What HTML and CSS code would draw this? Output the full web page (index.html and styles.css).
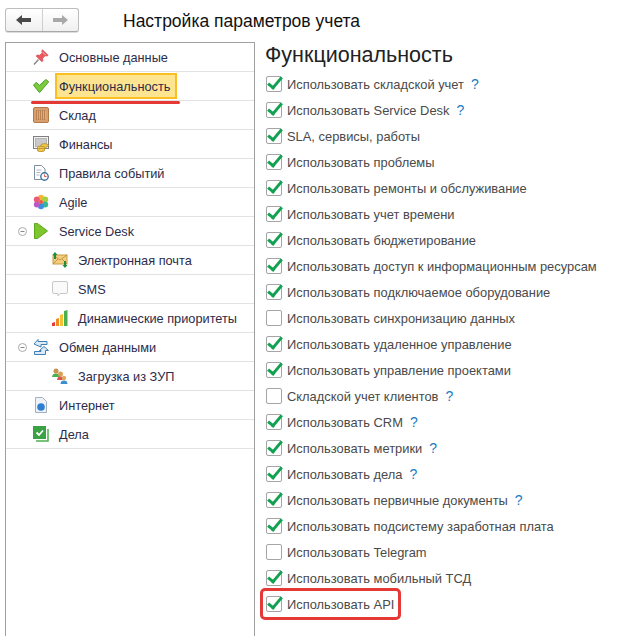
FILE: index.html
```html
<!DOCTYPE html>
<html lang="ru">
<head>
<meta charset="utf-8">
<title>Настройка параметров учета</title>
<link rel="stylesheet" href="styles.css">
</head>
<body>
<header class="top">
  <div class="navbtns">
    <button class="navbtn back"><svg width="16" height="12" viewBox="0 0 16 12"><path d="M0 6 6 1v3h9v4H6v3z" fill="#4a4a4a"/></svg></button>
    <button class="navbtn fwd"><svg width="16" height="12" viewBox="0 0 16 12"><path d="M16 6 10 1v3H1v4h9v3z" fill="#a8a8a8"/></svg></button>
  </div>
  <h1 class="title">Настройка параметров учета</h1>
</header>
<main class="main">
  <nav class="side">
    <div class="row"><span class="tree"></span><svg class="ico" width="16" height="16" viewBox="0 0 16 16"><path d="M5.500 10.500 1 15.500" stroke="#8a8a8a" stroke-width="1.500"/><path d="M9.500.8l5.700 5.500-1.200.8-1.900-.3-2.400 2.400.2 2.500-1 1.100-5.800-5.800 1.100-1 2.500.3 2.400-2.400-.3-2z" fill="#ea5a5f" stroke="#cf3f46" stroke-width=".6"/><path d="M9.500 3l3 3" stroke="#f9b6b6"/></svg><span class="lbl">Основные данные</span></div>
    <div class="row"><span class="tree"></span><svg class="ico" width="16" height="14" viewBox="0 0 16 14"><path d="M.5 6.200 3.200 3.300l3.300 3L12.600.7c1.300.1 2.500 1 2.900 2.400L6.800 13.300h-.6z" fill="#7ccb3c" stroke="#4f9e2c"/></svg><span class="lbl sel">Функциональность</span></div>
    <div class="row"><span class="tree"></span><svg class="ico" width="16" height="16" viewBox="0 0 16 16"><rect x=".5" y=".5" width="15" height="15" rx="1.500" fill="#d9a06e" stroke="#b07a4c"/><rect x="3" y="3" width="10" height="10" fill="#b98250"/><path d="M4.500 3.500v9M6.500 3.500v9M8.500 3.500v9M10.500 3.500v9M12.500 3.500v9" stroke="#d9ae86"/></svg><span class="lbl">Склад</span></div>
    <div class="row"><span class="tree"></span><svg class="ico" width="16" height="16" viewBox="0 0 16 16"><rect x=".5" y=".5" width="15" height="12" fill="#f2f2f2" stroke="#808080"/><rect x="2.500" y="2.500" width="11" height="8" fill="#c9c9c9" stroke="#8a8a8a" stroke-dasharray="1 1"/><ellipse cx="11.500" cy="9.500" rx="3.800" ry="1.800" fill="#f2c84f" stroke="#b78a20" stroke-width=".8"/><ellipse cx="8" cy="12" rx="3.800" ry="1.800" fill="#f2c84f" stroke="#b78a20" stroke-width=".8"/><ellipse cx="8" cy="14" rx="3.800" ry="1.600" fill="#f2c84f" stroke="#b78a20" stroke-width=".8"/></svg><span class="lbl">Финансы</span></div>
    <div class="row"><span class="tree"></span><svg class="ico" width="16" height="16" viewBox="0 0 16 16"><path d="M1.500.5h7l3.500 3.500v10.500H1.500z" fill="#fff" stroke="#7c8ea0"/><path d="M3.500 5h5M3.500 7.500h4M3.500 10h3" stroke="#a9b6c2"/><circle cx="11.500" cy="11.500" r="3.700" fill="#fff" stroke="#3e6fa0" stroke-width="1.400"/><path d="M11.500 9.500v2h2" stroke="#d9534f" fill="none"/></svg><span class="lbl">Правила событий</span></div>
    <div class="row"><span class="tree"></span><svg class="ico" width="16" height="16" viewBox="0 0 16 16"><circle cx="8" cy="3.800" r="3" fill="#f7b733"/><circle cx="12.200" cy="5.500" r="3" fill="#a5cf3e"/><circle cx="12.200" cy="10.500" r="3" fill="#37b69a"/><circle cx="8" cy="12.200" r="3" fill="#3b8fe0"/><circle cx="3.800" cy="10.500" r="3" fill="#b75bc9"/><circle cx="3.800" cy="5.500" r="3" fill="#ec5a7a"/><circle cx="8" cy="8" r="2" fill="#f0553a"/></svg><span class="lbl">Agile</span></div>
    <div class="row"><span class="tree"><svg class="minus" width="9" height="9" viewBox="0 0 9 9"><circle cx="4.500" cy="4.500" r="4" fill="#fff" stroke="#aaa"/><path d="M2.500 4.500h4" stroke="#888"/></svg></span><svg class="ico" width="14" height="16" viewBox="0 0 14 16"><path d="M.5.500h3L13.500 8l-10 7.500h-3z" fill="#7cc52d" stroke="#5fa81e"/></svg><span class="lbl">Service Desk</span></div>
    <div class="row sub"><svg class="ico" width="16" height="16" viewBox="0 0 16 16"><rect x="1" y="3" width="14" height="9" fill="#f3cd80" stroke="#c99a40"/><path d="M1 3l7 5 7-5M1 12l5-5M15 12l-5-5" fill="none" stroke="#b98a30" stroke-width=".8"/><path d="M3 0 .5 3H2v4h2V3h1.500zM13 16l2.500-3H14V9h-2v4h-1.500z" fill="#1e8e3e"/></svg><span class="lbl">Электронная почта</span></div>
    <div class="row sub"><svg class="ico" width="16" height="16" viewBox="0 0 16 16"><path d="M2 .5h12a1.500 1.500 0 0 1 1.500 1.500v9a1.500 1.500 0 0 1-1.500 1.500H8l-2 2.500v-2.500H2A1.500 1.500 0 0 1 .5 11V2A1.500 1.500 0 0 1 2 .5z" fill="#fafafa" stroke="#c8c8c8"/></svg><span class="lbl">SMS</span></div>
    <div class="row sub"><svg class="ico" width="16" height="16" viewBox="0 0 16 16"><path d="M0 16v-3l3-1v4z" fill="#e53935"/><path d="M4 16V9l3-1v8z" fill="#f08a24"/><path d="M8 16V5l3-1v12z" fill="#f2c230"/><path d="M12 16V1l3.500-1v16z" fill="#4caf50"/></svg><span class="lbl">Динамические приоритеты</span></div>
    <div class="row"><span class="tree"><svg class="minus" width="9" height="9" viewBox="0 0 9 9"><circle cx="4.500" cy="4.500" r="4" fill="#fff" stroke="#aaa"/><path d="M2.500 4.500h4" stroke="#888"/></svg></span><svg class="ico" width="16" height="16" viewBox="0 0 16 16"><path d="M5 .5v2h9v3H8v2.500L1 5zM11 7.500l4.500 4h-3v4H1.500v-3H8v-1H6.500z" fill="#dcebf7" stroke="#3f7fb3"/></svg><span class="lbl">Обмен данными</span></div>
    <div class="row sub"><svg class="ico" width="16" height="16" viewBox="0 0 16 16"><circle cx="4" cy="3" r="2.500" fill="#c9924d"/><path d="M0 9c0-2.500 2-3.500 4-3.500S8 6.500 8 9z" fill="#4caf50"/><circle cx="8.500" cy="6" r="2.500" fill="#d9a05a"/><path d="M5 12c0-2.500 2-3.500 3.500-3.500s4 1 4 3.500z" fill="#d9534f"/><circle cx="12" cy="10" r="2.200" fill="#e0a860"/><path d="M8.500 16c0-2.500 1.500-3.500 3.500-3.500s3.500 1 3.500 3.500z" fill="#3f8fd0"/></svg><span class="lbl">Загрузка из ЗУП</span></div>
    <div class="row"><span class="tree"></span><svg class="ico" width="16" height="16" viewBox="0 0 12 16"><path d="M.5.500h7l4 4v11H.5z" fill="#eef2f6" stroke="#a3b1be"/><circle cx="6" cy="10" r="3.800" fill="#2f7fd0"/></svg><span class="lbl">Интернет</span></div>
    <div class="row"><span class="tree"></span><svg class="ico" width="16" height="16" viewBox="0 0 16 16"><path d="M15 3v12H3" fill="none" stroke="#4caf50" stroke-width="1.500"/><rect x="0" y="0" width="13" height="13" fill="#3aa245"/><path d="M3.500 6.500 6 9l4-4.500" fill="none" stroke="#fff" stroke-width="1.800"/></svg><span class="lbl">Дела</span></div>
    <div class="underline"></div>
  </nav>
  <section class="content">
    <h2 class="heading">Функциональность</h2>
    <div class="opts">
      <div class="opt"><span class="cb on"></span>Использовать складской учет<span class="q">?</span></div>
      <div class="opt"><span class="cb on"></span>Использовать Service Desk<span class="q">?</span></div>
      <div class="opt"><span class="cb on"></span>SLA, сервисы, работы</div>
      <div class="opt"><span class="cb on"></span>Использовать проблемы</div>
      <div class="opt"><span class="cb on"></span>Использовать ремонты и обслуживание</div>
      <div class="opt"><span class="cb on"></span>Использовать учет времени</div>
      <div class="opt"><span class="cb on"></span>Использовать бюджетирование</div>
      <div class="opt"><span class="cb on"></span>Использовать доступ к информационным ресурсам</div>
      <div class="opt"><span class="cb on"></span>Использовать подключаемое оборудование</div>
      <div class="opt"><span class="cb"></span>Использовать синхронизацию данных</div>
      <div class="opt"><span class="cb on"></span>Использовать удаленное управление</div>
      <div class="opt"><span class="cb on"></span>Использовать управление проектами</div>
      <div class="opt"><span class="cb"></span>Складской учет клиентов<span class="q">?</span></div>
      <div class="opt"><span class="cb on"></span>Использовать CRM<span class="q">?</span></div>
      <div class="opt"><span class="cb on"></span>Использовать метрики<span class="q">?</span></div>
      <div class="opt"><span class="cb on"></span>Использовать дела<span class="q">?</span></div>
      <div class="opt"><span class="cb on"></span>Использовать первичные документы<span class="q">?</span></div>
      <div class="opt"><span class="cb on"></span>Использовать подсистему заработная плата</div>
      <div class="opt"><span class="cb"></span>Использовать Telegram</div>
      <div class="opt"><span class="cb on"></span>Использовать мобильный ТСД</div>
      <div class="opt marked"><span class="cb on"></span>Использовать API</div>
    </div>
  </section>
</main>
</body>
</html>
```
FILE: styles.css
```css
*, *::before, *::after { box-sizing: border-box; }
html, body { margin: 0; height: 636px; overflow: hidden; background: #fff; }
body { font-family: "Liberation Sans", Arial, sans-serif; color: #333; display: flex; flex-direction: column; }
.top { height: 42px; flex: none; display: flex; align-items: flex-start; padding: 8px 0 0 5px; }
.navbtns { display: flex; width: 74px; height: 24px; border: 1px solid #bdbdbd; border-bottom-color: #a8a8a8; border-radius: 3px; background: linear-gradient(#fff, #f0f0f0); box-shadow: 0 1px 0 #ddd; }
.navbtn { flex: 1; padding: 0; border: 0; background: none; display: flex; align-items: center; justify-content: center; }
.back { border-right: 1px solid #cfcfcf; }
.title { margin: 0 0 0 44px; font-size: 17.5px; line-height: 26px; font-weight: 400; color: #111; }
.main { flex: 1; display: flex; min-height: 0; }
.side { position: relative; width: 250px; margin-left: 5px; border: 1px solid #a0a0a0; border-bottom: 0; flex: none; }
.row { height: 29px; border-bottom: 1px solid #e2e2e2; display: flex; align-items: center; padding-left: 10px; font-size: 12.75px; color: #2c2c4a; }
.row.sub { padding-left: 46px; }
.tree { width: 17px; flex: none; display: flex; align-items: center; }
.minus { display: block; margin-left: 2px; }
.ico { flex: none; width: 16px; margin-right: 10px; }
.lbl { white-space: nowrap; padding-top: 1px; }
.lbl.sel { width: 122px; height: 26px; margin-left: -4px; padding: 0 2px; border: 2px solid #fbbf24; background: #fde490; line-height: 23px; }
.underline { position: absolute; left: 25px; top: 58px; width: 149px; height: 3px; border-radius: 2px; background: #e53935; }
.content { flex: 1; padding-left: 10px; min-width: 0; }
.heading { margin: 0; font-size: 21.5px; font-weight: 400; line-height: 26px; color: #222; }
.opts { margin-top: 3px; }
.opt { position: relative; height: 26px; display: flex; align-items: center; font-size: 12.9px; color: #4a4a4a; white-space: nowrap; }
.cb { position: relative; width: 16px; height: 16px; flex: none; margin: 0 5px 0 1px; border: 1px solid #a5a5a5; border-radius: 2px; background: #fff; }
.cb.on::after { content: ""; position: absolute; left: 4px; top: -3px; width: 8px; height: 15px; border: solid #12a150; border-width: 0 3px 3px 0; transform: rotate(40deg); }
.q { margin-left: 7px; color: #1b7cc2; font-size: 14px; }
.marked::after { content: ""; position: absolute; left: -5px; top: -3px; width: 141px; height: 32px; border: 3px solid #e53935; border-radius: 5px; }
```
